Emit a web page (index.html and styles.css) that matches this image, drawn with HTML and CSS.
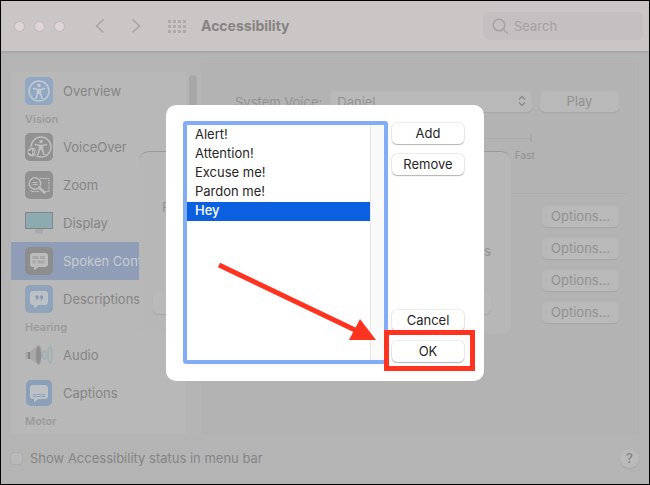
FILE: index.html
```html
<!DOCTYPE html>
<html lang="en">
<head>
    <meta charset="UTF-8">
    <meta name="viewport" content="width=device-width, initial-scale=1.0">
    <title>Accessibility</title>
    <link rel="stylesheet" href="styles.css">
</head>
<body>

<div class="window">
    <header class="toolbar">
        <div class="lights"><span></span><span></span><span></span></div>
        <nav class="nav">
            <button class="icon-button" aria-label="Back">
                <svg width="10" height="16" viewBox="0 0 10 16"><path d="M8.500 1.500L1.500 8l7 6.500"/></svg>
            </button>
            <button class="icon-button" aria-label="Forward">
                <svg width="10" height="16" viewBox="0 0 10 16"><path d="M1.500 1.500L8.500 8l-7 6.500"/></svg>
            </button>
        </nav>
        <button class="icon-button" aria-label="Show all">
            <svg class="grid-icon" width="18" height="13" viewBox="0 0 18 13">
                <path d="M0 1.500h18M0 6.500h18M0 11.500h18"/>
            </svg>
        </button>
        <h1 class="title">Accessibility</h1>
        <label class="search">
            <svg width="17" height="17" viewBox="0 0 17 17"><circle cx="7" cy="7" r="5.800"/><path d="M11.300 11.300l4.500 4.500"/></svg>
            <input type="search" placeholder="Search" aria-label="Search">
        </label>
    </header>

    <main class="content">
        <nav class="sidebar">
            <a class="item" href="#overview">
                <svg width="28" height="28" viewBox="0 0 28 28">
                    <rect width="28" height="28" rx="5" fill="#91a8c5"/>
                    <circle cx="14" cy="14" r="10" fill="none" stroke="#c3c8ce" stroke-width="1.500"/>
                    <circle cx="14" cy="8.500" r="1.700" fill="#c3c8ce"/>
                    <path d="M8.500 11.500l4 1h3l4-1M12.500 12.500v4l-1.500 5M15.500 12.500v4l1.500 5M14 12.500v4" fill="none" stroke="#c3c8ce" stroke-width="1.600" stroke-linecap="round"/>
                </svg>
                Overview
            </a>
            <h2>Vision</h2>
            <a class="item" href="#voiceover">
                <svg width="28" height="28" viewBox="0 0 28 28">
                    <rect width="28" height="28" rx="5" fill="#919191"/>
                    <circle cx="16" cy="14" r="10" fill="none" stroke="#bebebe" stroke-width="1.500"/>
                    <circle cx="16" cy="8.500" r="1.700" fill="#bebebe"/>
                    <path d="M10.500 11.500l4 1h3l4-1M14.500 12.500v4l-1.500 5M17.500 12.500v4l1.500 5M16 12.500v4" fill="none" stroke="#bebebe" stroke-width="1.600" stroke-linecap="round"/>
                    <circle cx="7" cy="19" r="5" fill="#bebebe" stroke="#919191"/>
                    <path d="M3.500 18h1.500l2-2v6l-2-2H3.500z" fill="#858585"/>
                    <path d="M8.300 17.500q1 1.500 0 3M9.800 16.500q2 2.500 0 5" fill="none" stroke="#858585" stroke-width=".8"/>
                </svg>
                VoiceOver
            </a>
            <a class="item" href="#zoom">
                <svg width="28" height="28" viewBox="0 0 28 28">
                    <rect width="28" height="28" rx="5" fill="#919191"/>
                    <path d="M15 7.500h9v13h-4M6 19v1.500h8" fill="none" stroke="#bebebe" stroke-dasharray="2 .5"/>
                    <circle cx="10" cy="12.500" r="5.700" fill="#919191" stroke="#bebebe" stroke-width="1.500"/>
                    <path d="M7.500 11.500h5M7.500 13.500h5" stroke="#bebebe"/>
                    <path d="M14.500 17l5 4.500" stroke="#bebebe" stroke-width="2.500" stroke-linecap="round"/>
                </svg>
                Zoom
            </a>
            <a class="item" href="#display">
                <svg width="28" height="28" viewBox="0 0 28 28">
                    <path d="M10 20h8v4.500h-8z" fill="#a9a9a9"/>
                    <rect x=".5" y="3.500" width="27" height="16" fill="#8babb0" stroke="#858585"/>
                </svg>
                Display
            </a>
            <a class="item selected" href="#spoken" aria-current="page">
                <svg width="28" height="28" viewBox="0 0 28 28">
                    <rect width="28" height="28" rx="5" fill="#8d8d8d"/>
                    <path d="M8 6h12q3 0 3 3v8q0 3-3 3h-6.500L9 23.500V20H8q-3 0-3-3V9q0-3 3-3z" fill="#bcbcbc"/>
                    <path d="M7.500 10.500h6M15 10.500h5M7.500 15h3M12.500 15h7" stroke="#a8a8a8" stroke-width="3"/>
                </svg>
                Spoken Content
            </a>
            <a class="item" href="#descriptions">
                <svg width="28" height="28" viewBox="0 0 28 28">
                    <rect width="28" height="28" rx="5" fill="#8fa3bb"/>
                    <path d="M8 6h12q3 0 3 3v8q0 3-3 3h-6.500L9 23.500V20H8q-3 0-3-3V9q0-3 3-3z" fill="#bdc0c4"/>
                    <circle cx="12" cy="12" r="1.700" fill="#8299b5"/><circle cx="16.500" cy="12" r="1.700" fill="#8299b5"/>
                    <path d="M13.200 12q0 2-2 3.500M17.700 12q0 2-2 3.500" fill="none" stroke="#8299b5"/>
                </svg>
                Descriptions
            </a>
            <h2>Hearing</h2>
            <a class="item" href="#audio">
                <svg width="28" height="28" viewBox="0 0 28 28">
                    <path d="M1 11h4l8-6.500v19L5 18H1q-1-3.500 0-7z" fill="#a8a8a8"/>
                    <path d="M4 11v7" stroke="#858585" stroke-width="2"/>
                    <ellipse cx="13.500" cy="14" rx="3" ry="9.500" fill="#8f8f8f" stroke="#a6a6a6"/>
                    <ellipse cx="19.500" cy="14" rx="1.500" ry="4" fill="none" stroke="#9db0b3" stroke-width="1.500"/>
                    <ellipse cx="25" cy="14" rx="2" ry="7.500" fill="none" stroke="#9db0b3" stroke-width="1.500"/>
                </svg>
                Audio
            </a>
            <a class="item" href="#captions">
                <svg width="28" height="28" viewBox="0 0 28 28">
                    <rect x="1" y="1" width="26" height="26" rx="5" fill="#8b9fb9"/>
                    <path d="M8 6h12q3 0 3 3v8q0 3-3 3h-6.500L9 23.500V20H8q-3 0-3-3V9q0-3 3-3z" fill="#bdc0c4"/>
                    <path d="M8 15.500h12M8 17.500h12" stroke="#8b9fb9" stroke-dasharray="3.500 .7"/>
                </svg>
                Captions
            </a>
            <h2>Motor</h2>
        </nav>
        <div class="track"><div class="thumb"></div></div>

        <section class="pane">
            <div class="voice-row">
                <label for="voice">System Voice:</label>
                <div class="popup">
                    <select id="voice"><option>Daniel</option></select>
                    <svg width="8" height="12" viewBox="0 0 8 12"><path d="M1 4.500l3-3 3 3M1 7.500l3 3 3-3"/></svg>
                </div>
                <button class="button">Play</button>
            </div>
            <div class="rate">
                <div class="rate-track"></div>
                <span>Fast</span>
            </div>
            <div class="options">
                <button class="button">Options...</button>
                <button class="button">Options...</button>
                <button class="button">Options...</button>
                <button class="button">Options...</button>
            </div>
        </section>
    </main>

    <footer class="footer">
        <input type="checkbox" id="status">
        <label for="status">Show Accessibility status in menu bar</label>
        <button class="help" aria-label="Help">?</button>
    </footer>
</div>

<div class="overlay">
    <div class="sheet">
        <div class="sheet-row"><span>P</span></div>
        <div class="sheet-row end"><span>ls</span></div>
        <div class="sheet-row buttons">
            <button class="button" aria-label="Defaults"></button>
            <button class="button" aria-label="Done"></button>
        </div>
    </div>
</div>

<div class="overlay">
    <div class="dialog">
        <select class="phrases" size="12" aria-label="Phrases">
            <option>Alert!</option>
            <option>Attention!</option>
            <option>Excuse me!</option>
            <option>Pardon me!</option>
            <option selected>Hey</option>
        </select>
        <div class="actions">
            <button class="button">Add</button>
            <button class="button">Remove</button>
            <button class="button cancel">Cancel</button>
            <div class="highlight"><button class="button">OK</button></div>
        </div>
        <svg class="arrow" width="160" height="80" viewBox="0 0 160 80">
            <path d="M1 2L137 67" stroke="#ff3320" stroke-width="5"/>
            <path d="M142 56l16 21h-27z" fill="#ff3320"/>
        </svg>
    </div>
</div>

</body>
</html>
```
FILE: styles.css
```css
* {
    box-sizing: border-box;
}

body {
    margin: 0;
    font-family: Inter, "Liberation Sans", sans-serif;
    font-size: 13px;
    line-height: 18px;
    color: #868686;
}

button, input, select {
    font: inherit;
    color: inherit;
    margin: 0;
}

.window {
    display: flex;
    flex-direction: column;
    min-height: 100vh;
    border: 1px solid #000;
    background: #b4b4b4;
}

/* toolbar */
.toolbar {
    display: flex;
    align-items: center;
    height: 52px;
    padding: 0 6px 0 13px;
    background: #cbc6c6;
    border-bottom: 2px solid #aaa8a8;
}

.lights {
    display: flex;
    gap: 9px;
}

.lights span {
    width: 11px;
    height: 11px;
    border-radius: 50%;
    background: #dfd4d7;
    border: 1px solid #c3b7ba;
}

.nav {
    display: flex;
    gap: 26px;
    margin: 0 27px 0 30px;
}

.icon-button {
    display: flex;
    padding: 0;
    border: none;
    background: none;
}

.icon-button svg, .search svg, .popup svg {
    fill: none;
    stroke: #a7a3a3;
    stroke-width: 1.5;
}

.icon-button .grid-icon {
    stroke: #aeaaaa;
    stroke-width: 3;
    stroke-dasharray: 3 2;
}

.title {
    margin: 0 0 0 15px;
    font-size: 14px;
    font-weight: 700;
    color: #868383;
}

.search {
    display: flex;
    align-items: center;
    gap: 5px;
    width: 160px;
    height: 28px;
    margin-left: auto;
    padding-left: 9px;
    border-radius: 6px;
    background: #c4bfc0;
}

.search input {
    flex: 1;
    min-width: 0;
    padding: 0;
    border: none;
    background: none;
}

.search input::placeholder {
    color: #a5a1a1;
}

/* content */
.content {
    display: flex;
    flex: 1;
    padding: 10px 10px 0;
}

.sidebar {
    width: 175px;
    margin-top: 9px;
    padding-bottom: 4px;
    background: #b8b8b8;
}

.item {
    display: flex;
    align-items: center;
    gap: 10px;
    height: 38px;
    padding-left: 14px;
    color: #858585;
    text-decoration: none;
    white-space: nowrap;
}

.item.selected {
    background: #8f9db6;
    color: #c9ccd1;
}

.sidebar h2 {
    margin: 0;
    padding-left: 14px;
    font-size: 11px;
    font-weight: 600;
    line-height: 18px;
    color: #9b9b9b;
}

.track {
    width: 15px;
    margin-top: 9px;
    padding: 3px;
    background: #b5b5b5;
}

.thumb {
    width: 8px;
    height: 180px;
    border-radius: 4px;
    background: #a7a7a7;
}

.pane {
    flex: 1;
    padding: 27px 19px 0 34px;
    border: 1px solid #b0b0b0;
    border-left: none;
    background: #b3b3b3;
}

.button {
    display: block;
    height: 21px;
    padding: 0;
    border: none;
    border-radius: 5px;
    line-height: 21px;
    text-align: center;
}

.window .button, .sheet .button, .popup select {
    color: #929292;
    background: #b9b9b9;
    box-shadow: 0 1px 1px #a6a6a6;
}

.voice-row {
    display: flex;
    align-items: center;
    gap: 8px;
    color: #929292;
}

.voice-row .button {
    width: 79px;
}

.popup {
    position: relative;
    flex: 1;
}

.popup select {
    display: block;
    width: 100%;
    height: 21px;
    padding: 0 7px;
    border: none;
    border-radius: 5px;
    appearance: none;
}

.popup svg {
    position: absolute;
    top: 4px;
    right: 6px;
    stroke: #8c8c8c;
}

.rate {
    margin: 22px 84px 0 93px;
    font-size: 10px;
    font-weight: 500;
    text-align: right;
    color: #969696;
}

.rate-track {
    height: 8px;
    margin-right: 3px;
    margin-bottom: 4px;
    border-right: 2px solid #a9a9a9;
    background: linear-gradient(#acacac, #acacac) 0 4px / 100% 1px no-repeat;
}

.options {
    display: flex;
    flex-direction: column;
    align-items: flex-end;
    gap: 11px;
    margin-top: 29px;
    margin-right: -8px;
    padding: 12px 8px 0 0;
    border-top: 1px solid #acacac;
}

.options .button {
    width: 77px;
}

/* footer */
.footer {
    display: flex;
    align-items: center;
    gap: 7px;
    height: 50px;
    padding: 0 10px 2px 9px;
    color: #858585;
}

.footer input {
    width: 13px;
    height: 13px;
    border: 1px solid #ababab;
    border-radius: 3px;
    background: #b9b9b9;
    appearance: none;
}

.help {
    width: 19px;
    height: 19px;
    margin-left: auto;
    padding: 0;
    border: none;
    border-radius: 50%;
    background: #bababa;
    box-shadow: 0 1px 1px #a6a6a6;
    font-weight: 500;
}

/* dialogs */
.overlay {
    position: fixed;
    inset: 0;
    display: flex;
    align-items: center;
    justify-content: center;
}

.sheet {
    display: flex;
    flex-direction: column;
    gap: 26px;
    width: 372px;
    height: 183px;
    padding: 46px 20px 20px 14px;
    border-radius: 10px;
    border-top: 1px solid #999;
    background: #b7b7b7;
    color: #929292;
}

.sheet-row {
    display: flex;
    padding-left: 9px;
}

.sheet-row.end {
    justify-content: flex-end;
}

.sheet-row.buttons {
    justify-content: space-between;
    margin-top: auto;
    padding: 0;
}

.sheet .button {
    width: 72px;
}

.dialog {
    position: relative;
    display: flex;
    gap: 4px;
    width: 318px;
    padding: 16px 20px 17px 17px;
    border-radius: 10px;
    background: #fff;
    color: #262626;
}

/* right padding holds the empty scroll track */
.phrases {
    flex: 1;
    min-width: 0;
    height: 243px;
    padding: 1px 14px 0 0;
    border: 4px solid #82adf6;
    border-radius: 3px;
    outline: none;
    background: linear-gradient(90deg, #e6e6e6 1px, #fafafa 1px) right / 14px 100% no-repeat #fff;
}

.phrases option {
    min-height: 19px;
    padding: 0 8px;
    line-height: 19px;
}

.phrases option:checked {
    background: #0a60df linear-gradient(#0a60df, #0a60df);
    -webkit-text-fill-color: #fff;
    font-weight: 500;
}

.actions {
    display: flex;
    flex-direction: column;
    gap: 10px;
    width: 72px;
    padding: 2px 0;
}

.dialog .button {
    width: 100%;
    background: #fff;
    box-shadow: 0 1px 1px #b4b4b4, 0 0 1px 1px #ececec;
}

.cancel {
    margin-top: auto;
}

.highlight {
    position: relative;
}

.highlight::after {
    content: "";
    position: absolute;
    inset: -11px -11px -9px -8px;
    border: 5px solid #ff3320;
    pointer-events: none;
}

.arrow {
    position: absolute;
    top: 158px;
    left: 52px;
    pointer-events: none;
}
```
